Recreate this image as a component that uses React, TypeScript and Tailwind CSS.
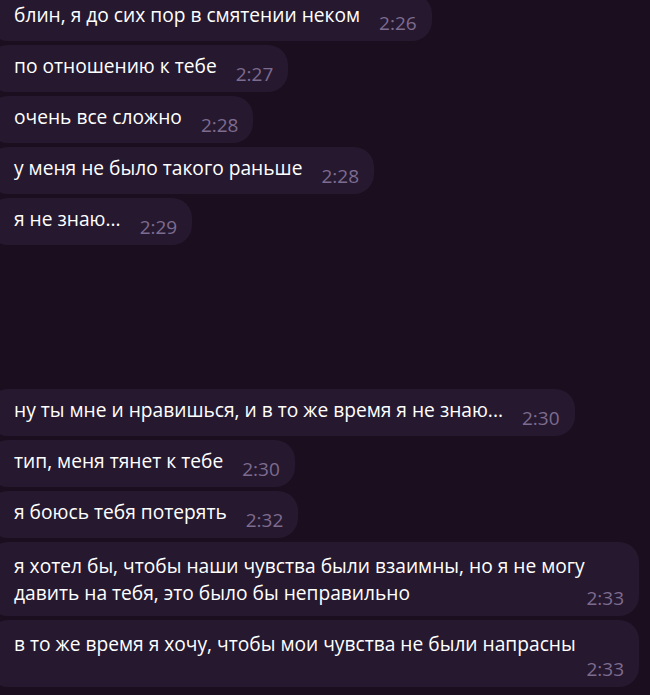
import React from 'react';

type Msg = { text: string; time: string };

const top: Msg[] = [
  { text: 'блин, я до сих пор в смятении неком', time: '2:26' },
  { text: 'по отношению к тебе', time: '2:27' },
  { text: 'очень все сложно', time: '2:28' },
  { text: 'у меня не было такого раньше', time: '2:28' },
  { text: 'я не знаю...', time: '2:29' },
];

const bottom: Msg[] = [
  { text: 'ну ты мне и нравишься, и в то же время я не знаю...', time: '2:30' },
  { text: 'тип, меня тянет к тебе', time: '2:30' },
  { text: 'я боюсь тебя потерять', time: '2:32' },
];

const Time = ({ children, className = '' }: { children: React.ReactNode; className?: string }) => (
  <span className={`text-[19px] leading-[18px] text-[#7d6b90] whitespace-nowrap ${className}`}>{children}</span>
);

// короткое сообщение: текст и время в одну строку
const Bubble = ({ msg }: { msg: Msg }) => (
  <div className="flex items-end -ml-[12px] pl-[26px] pr-[15px] pt-[8px] pb-[13px] rounded-[20px] bg-[#26192f]">
    <span className="leading-[26px] text-white whitespace-nowrap">{msg.text}</span>
    <Time className="ml-[19px] -mb-[4px]">{msg.time}</Time>
  </div>
);

export default function App() {
  return (
    <div
      className="h-[695px] w-[650px] overflow-hidden bg-[#1a0e1f] text-[19.2px]"
      style={{ fontFamily: '"Open Sans", "Noto Sans", sans-serif' }}
    >
      <div className="flex flex-col items-start gap-[4px] -mt-[6px]">
        {top.map((m, i) => (
          <Bubble key={i} msg={m} />
        ))}

        <div className="h-[136px]" />

        {bottom.map((m, i) => (
          <Bubble key={i} msg={m} />
        ))}

        {/* длинное сообщение, время на последней строке */}
        <div className="w-[651px] -ml-[12px] pl-[26px] pr-[15px] pt-[10px] pb-[10px] rounded-[20px] bg-[#26192f] text-white leading-[27px]">
          <div className="whitespace-nowrap">я хотел бы, чтобы наши чувства были взаимны, но я не могу</div>
          <div className="flex items-end justify-between">
            <span className="whitespace-nowrap">давить на тебя, это было бы неправильно</span>
            <Time className="-mb-[1px]">2:33</Time>
          </div>
        </div>

        {/* время уходит на новую строку */}
        <div className="w-[651px] -ml-[12px] pl-[26px] pr-[15px] pt-[10px] pb-[9px] rounded-[20px] bg-[#26192f] flex flex-col">
          <span className="text-white leading-[27px] whitespace-nowrap">
            в то же время я хочу, чтобы мои чувства не были напрасны
          </span>
          <Time className="self-end mt-[3px]">2:33</Time>
        </div>
      </div>
    </div>
  );
}
